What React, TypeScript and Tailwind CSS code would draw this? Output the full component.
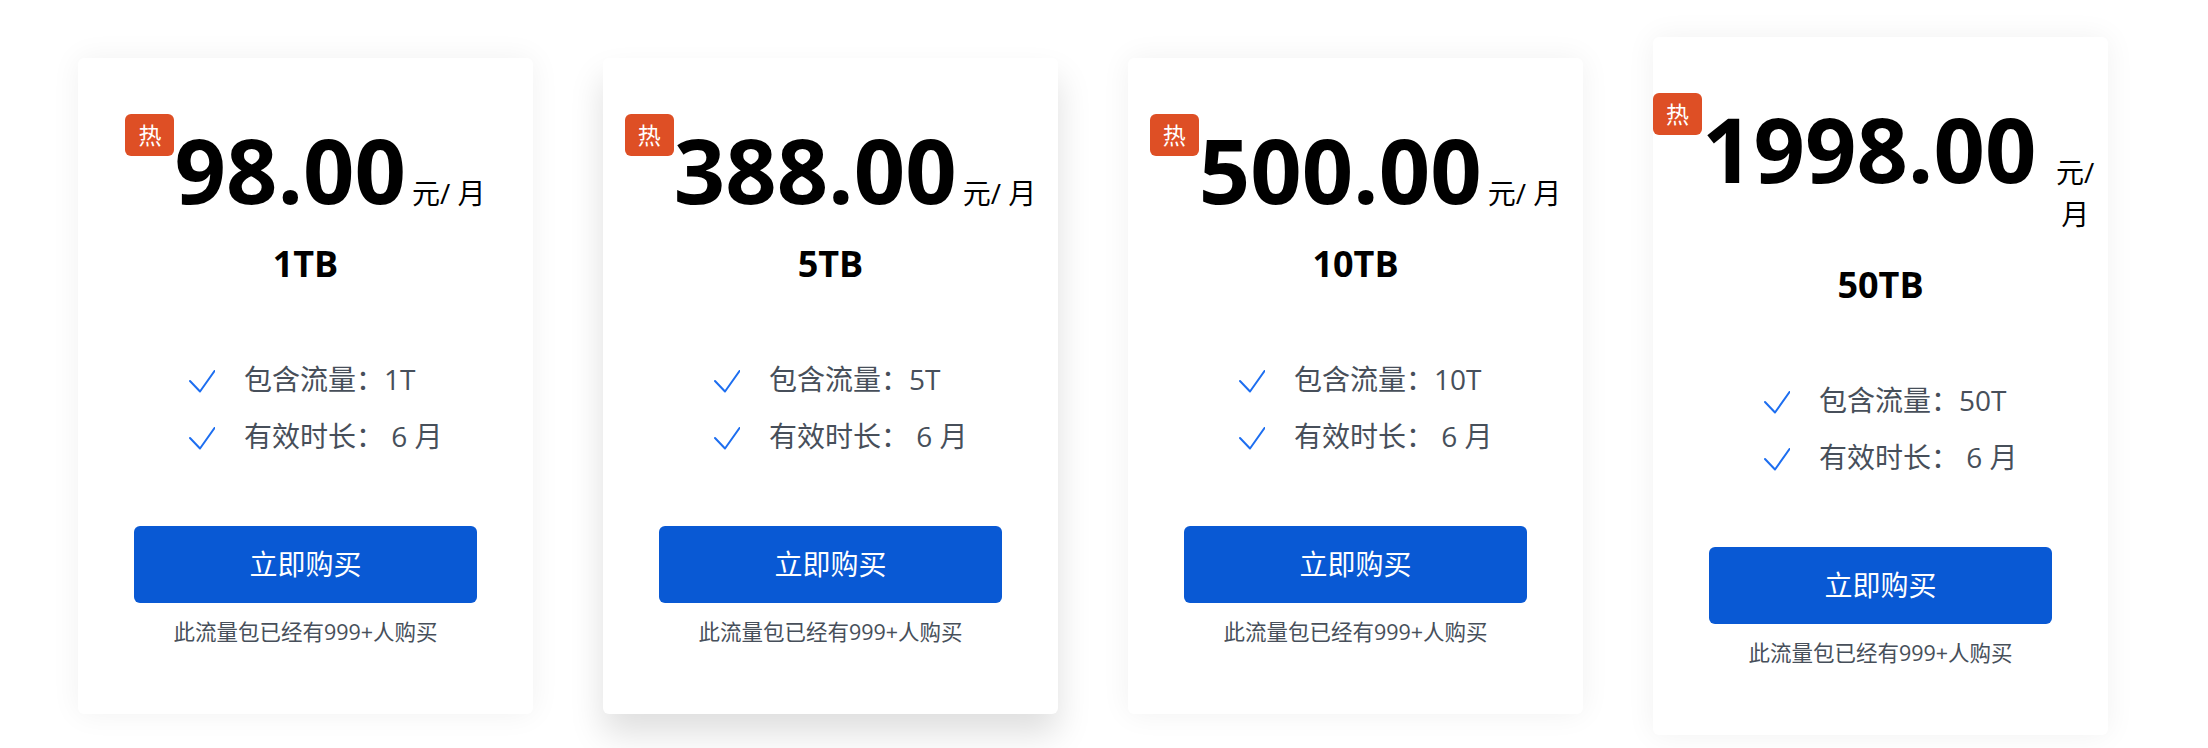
import React from "react";

type Plan = {
  price: string;
  size: string;
  traffic: string;
  months: number;
  hovered?: boolean;
};

const plans: Plan[] = [
  { price: "98.00", size: "1TB", traffic: "1T", months: 6 },
  { price: "388.00", size: "5TB", traffic: "5T", months: 6, hovered: true },
  { price: "500.00", size: "10TB", traffic: "10T", months: 6 },
  { price: "1998.00", size: "50TB", traffic: "50T", months: 6 },
];

const font = "font-['Open_Sans','Noto_Sans_CJK_SC',sans-serif]";

function Check() {
  return (
    <svg width="26" height="23" viewBox="0 0 26 23" fill="none" className="shrink-0 mt-[4px]">
      <path d="M1 11 L11 21.5 L25.5 1" stroke="#1d6ef0" strokeWidth="2" strokeLinecap="round" strokeLinejoin="round" />
    </svg>
  );
}

function PlanCard({ plan }: { plan: Plan }) {
  return (
    <div
      className={`w-[455px] shrink-0 bg-white rounded-[6px] text-center pt-[56px] pb-[66px] ${
        plan.hovered
          ? "shadow-[0_20px_34px_rgba(0,0,0,0.13)]"
          : "shadow-[0_0_30px_rgba(0,0,0,0.06)]"
      }`}
    >
      {/* Price row */}
      <div className="flex justify-center items-baseline">
        <span className="self-start shrink-0 w-[49px] h-[42px] rounded-[6px] bg-[#de4f25] text-white text-[23px] leading-[42px]">
          热
        </span>
        <span className="shrink-0 mt-[10px] text-[90px] leading-none font-bold text-black">{plan.price}</span>
        <span className="ml-[6px] text-[28px] leading-[42px] text-black">元/ 月</span>
      </div>

      {/* Size */}
      <p className="mt-[23px] text-[36px] leading-[54px] font-bold text-black">{plan.size}</p>

      {/* Features */}
      <div className="mt-[60px] pl-[111px] flex flex-col items-start text-[28px] leading-[57px] text-[#474f5a]">
        <div className="flex items-center gap-[29px]">
          <Check />
          <span>包含流量：{plan.traffic}</span>
        </div>
        <div className="flex items-center gap-[29px]">
          <Check />
          <span>有效时长： {plan.months} 月</span>
        </div>
      </div>

      {/* Buy */}
      <div className="px-[56px] mt-[61px]">
        <button className="w-full h-[77px] rounded-[6px] bg-[#0959d4] text-white text-[28px]">立即购买</button>
      </div>
      <p className="mt-[13px] text-[21.5px] leading-[32px] text-[#474f5a]">此流量包已经有999+人购买</p>
    </div>
  );
}

export default function App() {
  return (
    <div className={`${font} w-[2208px] h-[748px] bg-white flex items-center gap-[70px] pl-[78px] pt-[23px] overflow-hidden`}>
      {plans.map((p) => (
        <PlanCard key={p.size} plan={p} />
      ))}
    </div>
  );
}
